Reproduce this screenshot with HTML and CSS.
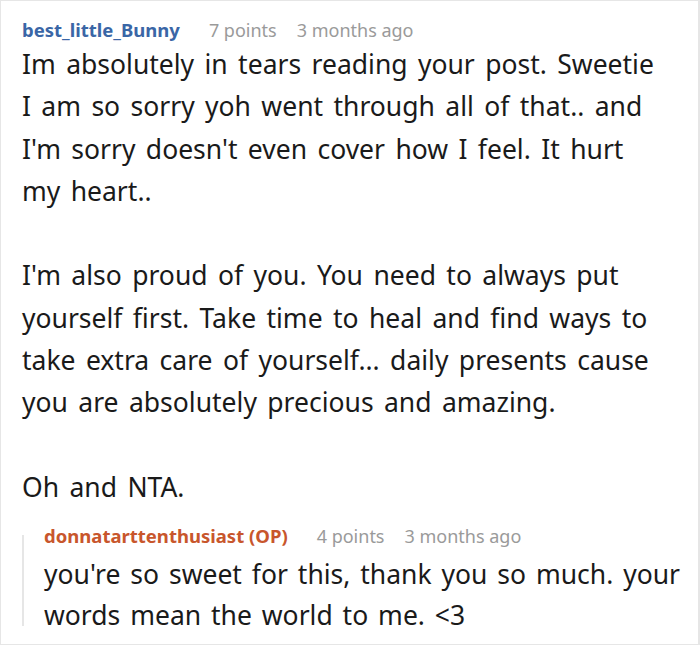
FILE: index.html
```html
<!DOCTYPE html>
<html lang="en">
<head>
    <meta charset="UTF-8">
    <meta name="viewport" content="width=device-width, initial-scale=1.0">
    <title>Comments</title>
    <link rel="stylesheet" href="styles.css">
</head>
<body>

    <div class="comment">
        <div class="meta">
            <span class="author">best_little_Bunny</span>
            <span class="info">7 points</span>
            <span class="info">3 months ago</span>
        </div>
        <div class="text">
            <p>Im absolutely in tears reading your post. Sweetie I am so sorry yoh went through all of that.. and I'm sorry doesn't even cover how I feel. It hurt my heart..</p>
            <p>I'm also proud of you. You need to always put yourself first. Take time to heal and find ways to take extra care of yourself... daily presents cause you are absolutely precious and amazing.</p>
            <p>Oh and NTA.</p>
        </div>

        <div class="reply">
            <div class="meta">
                <span class="author op">donnatarttenthusiast (OP)</span>
                <span class="info">4 points</span>
                <span class="info">3 months ago</span>
            </div>
            <div class="text">
                <p>you're so sweet for this, thank you so much. your words mean the world to me. &lt;3</p>
            </div>
        </div>
    </div>

</body>
</html>
```

FILE: styles.css
```css
* {
    margin: 0;
    padding: 0;
    box-sizing: border-box;
}

body {
    font-family: "Noto Sans", "Open Sans", sans-serif;
    background-color: #fff;
    color: #1a1a1a;
}

.comment {
    width: 700px;
    height: 645px;
    border: 1px solid #e6e6e6;
    border-right-width: 2px;
    padding: 15px 6px 0 21px;
}

.meta {
    display: flex;
    gap: 20px;
    font-size: 18px;
    line-height: 28px;
}

.author {
    color: #3a66a6;
    font-weight: bold;
    font-size: 18.5px;
    margin-right: 9px;
}

.author.op {
    color: #c8562c;
}

.info {
    color: #9a9a9a;
}

.text {
    font-size: 26.5px;
    word-spacing: 3.5px;
    line-height: 42.3px;
    margin-top: -1px;
    width: 642px;
}

.text p + p {
    margin-top: 42.3px;
}

/* reply thread line */
.reply {
    position: relative;
    margin-top: 14px;
    padding-left: 22px;
}

.reply::before {
    content: "";
    position: absolute;
    left: 0;
    top: 13px;
    bottom: 10px;
    width: 2px;
    background-color: #e6e6e6;
}

.reply .text {
    width: auto;
    margin-top: 4px;
    line-height: 41px;
    word-spacing: 3px;
}
```
